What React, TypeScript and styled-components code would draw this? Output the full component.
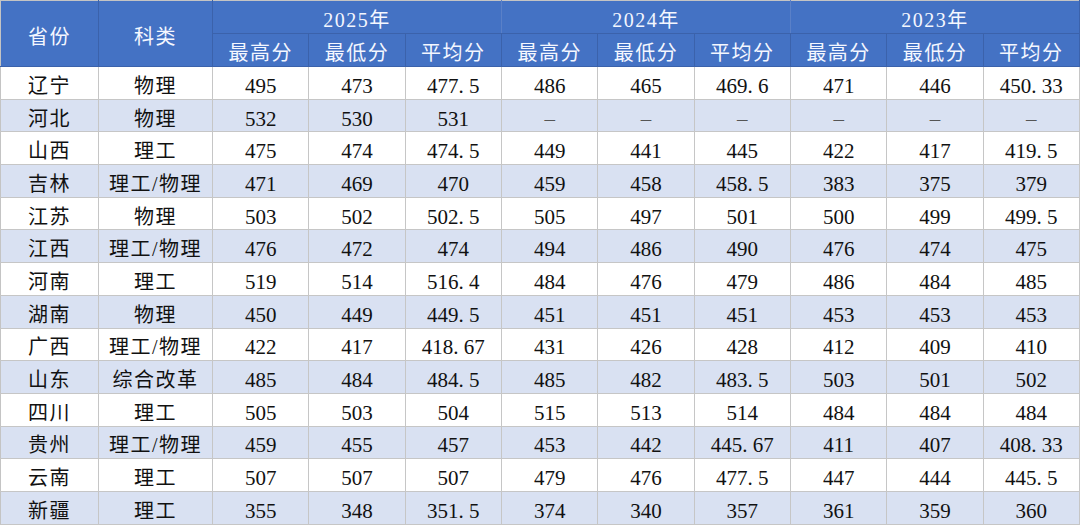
import React from 'react';
import styled, { createGlobalStyle } from 'styled-components';

const GlobalStyle = createGlobalStyle`
  html, body {
    margin: 0;
    padding: 0;
    background: #ffffff;
  }
  body {
    font-family: 'Liberation Serif', 'Noto Sans CJK SC', serif;
  }
`;

const Table = styled.table`
  width: 1080px;
  table-layout: fixed;
  border-collapse: collapse;
  border-top: 1px solid #c4c4c4;
  border-left: 1px solid #c4c4c4;
  font-size: 20px;
  color: #111111;
`;

const HeadCell = styled.th<{ top?: boolean; faint?: boolean }>`
  height: ${({ top }) => (top ? '26px' : '26px')};
  padding: 6px 0 0;
  line-height: 20px;
  background: #4472c4;
  color: #f4f7ff;
  font-weight: normal;
  text-align: center;
  vertical-align: middle;
  letter-spacing: 1.5px;
  border-right: 1px solid ${({ faint }) => (faint ? '#5a80c8' : '#3b62ab')};
  border-bottom: 1px solid #3b62ab;
`;

const Row = styled.tr<{ alt: boolean }>`
  height: 32.7px;
  background: ${({ alt }) => (alt ? '#d9e1f2' : '#ffffff')};
`;

const Cell = styled.td<{ cjk?: boolean }>`
  padding: 6px 0 0;
  text-align: center;
  vertical-align: middle;
  font-size: ${({ cjk }) => (cjk ? '20px' : '21px')};
  line-height: 20px;
  letter-spacing: ${({ cjk }) => (cjk ? '1.5px' : '0')};
  border-right: 1px solid #c6c6c6;
  border-bottom: 1px solid #c6c6c6;
  white-space: nowrap;
`;

const Dot = styled.span`
  display: inline-block;
  width: 0.5em;
  text-align: left;
`;

const Dash = styled.span`
  color: #555555;
`;

const years = ['2025年', '2024年', '2023年'];
const subs = ['最高分', '最低分', '平均分'];

const rows: [string, string, string[]][] = [
  ['辽宁', '物理', ['495', '473', '477.5', '486', '465', '469.6', '471', '446', '450.33']],
  ['河北', '物理', ['532', '530', '531', '-', '-', '-', '-', '-', '-']],
  ['山西', '理工', ['475', '474', '474.5', '449', '441', '445', '422', '417', '419.5']],
  ['吉林', '理工/物理', ['471', '469', '470', '459', '458', '458.5', '383', '375', '379']],
  ['江苏', '物理', ['503', '502', '502.5', '505', '497', '501', '500', '499', '499.5']],
  ['江西', '理工/物理', ['476', '472', '474', '494', '486', '490', '476', '474', '475']],
  ['河南', '理工', ['519', '514', '516.4', '484', '476', '479', '486', '484', '485']],
  ['湖南', '物理', ['450', '449', '449.5', '451', '451', '451', '453', '453', '453']],
  ['广西', '理工/物理', ['422', '417', '418.67', '431', '426', '428', '412', '409', '410']],
  ['山东', '综合改革', ['485', '484', '484.5', '485', '482', '483.5', '503', '501', '502']],
  ['四川', '理工', ['505', '503', '504', '515', '513', '514', '484', '484', '484']],
  ['贵州', '理工/物理', ['459', '455', '457', '453', '442', '445.67', '411', '407', '408.33']],
  ['云南', '理工', ['507', '507', '507', '479', '476', '477.5', '447', '444', '445.5']],
  ['新疆', '理工', ['355', '348', '351.5', '374', '340', '357', '361', '359', '360']],
];

const Num: React.FC<{ value: string }> = ({ value }) => {
  if (value === '-') return <Dash>–</Dash>;
  const [whole, frac] = value.split('.');
  if (frac === undefined) return <>{whole}</>;
  return (
    <>
      {whole}
      <Dot>.</Dot>
      {frac}
    </>
  );
};

export default function App() {
  return (
    <>
      <GlobalStyle />
      <Table>
        <colgroup>
          <col style={{ width: 98 }} />
          <col style={{ width: 114 }} />
          {subs.concat(subs, subs).map((_, i) => (
            <col key={i} />
          ))}
        </colgroup>
        <thead>
          <tr>
            <HeadCell top rowSpan={2}>省份</HeadCell>
            <HeadCell top rowSpan={2}>科类</HeadCell>
            {years.map((y, i) => (
              <HeadCell key={y} top colSpan={3} faint={i < 2}>
                {y}
              </HeadCell>
            ))}
          </tr>
          <tr>
            {years.map((y) =>
              subs.map((s) => <HeadCell key={y + s}>{s}</HeadCell>)
            )}
          </tr>
        </thead>
        <tbody>
          {rows.map(([prov, kind, vals], i) => (
            <Row key={prov} alt={i % 2 === 1}>
              <Cell cjk>{prov}</Cell>
              <Cell cjk>{kind}</Cell>
              {vals.map((v, j) => (
                <Cell key={j}>
                  <Num value={v} />
                </Cell>
              ))}
            </Row>
          ))}
        </tbody>
      </Table>
    </>
  );
}
